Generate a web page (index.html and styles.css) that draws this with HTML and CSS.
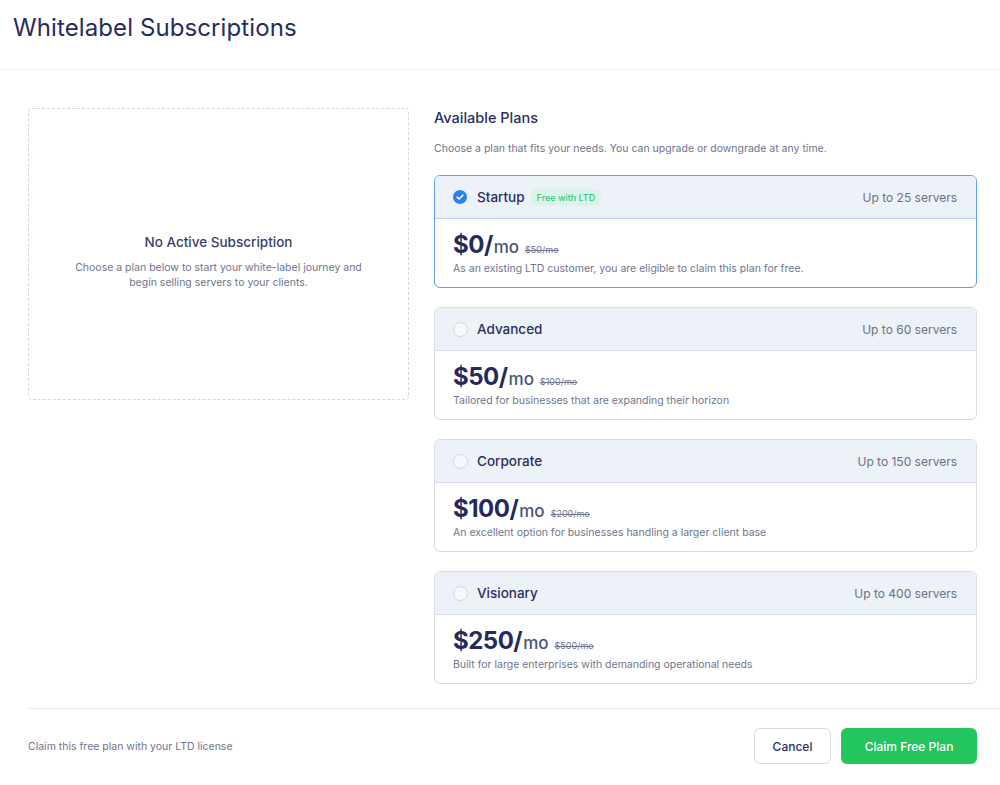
FILE: index.html
```html
<!DOCTYPE html>
<html lang="en">
<head>
    <meta charset="UTF-8">
    <meta name="viewport" content="width=device-width, initial-scale=1.0">
    <title>Whitelabel Subscriptions</title>
    <link rel="stylesheet" href="styles.css">
</head>
<body>
    <header class="page-header">
        <h1>Whitelabel Subscriptions</h1>
    </header>

    <main class="content">
        <div class="layout">
            <div class="empty-box">
                <h3>No Active Subscription</h3>
                <p>Choose a plan below to start your white-label journey and<br>begin selling servers to your clients.</p>
            </div>

            <section class="plans">
                <h2>Available Plans</h2>
                <p class="plans-sub">Choose a plan that fits your needs. You can upgrade or downgrade at any time.</p>

                <div class="plan selected">
                    <div class="plan-head">
                        <span class="radio checked">
                            <svg viewBox="0 0 14 14" width="14" height="14"><circle cx="7" cy="7" r="7" fill="#2f80ed"/><path d="M4.2 7.2l1.9 1.8 3.7-3.8" fill="none" stroke="#fff" stroke-width="1.6" stroke-linecap="round" stroke-linejoin="round"/></svg>
                        </span>
                        <span class="plan-name">Startup</span>
                        <span class="badge">Free with LTD</span>
                        <span class="servers">Up to 25 servers</span>
                    </div>
                    <div class="plan-body">
                        <div class="price"><b>$0/</b><span class="per">mo</span><s>$50/mo</s></div>
                        <p>As an existing LTD customer, you are eligible to claim this plan for free.</p>
                    </div>
                </div>

                <div class="plan">
                    <div class="plan-head">
                        <span class="radio"></span>
                        <span class="plan-name">Advanced</span>
                        <span class="servers">Up to 60 servers</span>
                    </div>
                    <div class="plan-body">
                        <div class="price"><b>$50/</b><span class="per">mo</span><s>$100/mo</s></div>
                        <p>Tailored for businesses that are expanding their horizon</p>
                    </div>
                </div>

                <div class="plan">
                    <div class="plan-head">
                        <span class="radio"></span>
                        <span class="plan-name">Corporate</span>
                        <span class="servers">Up to 150 servers</span>
                    </div>
                    <div class="plan-body">
                        <div class="price"><b>$100/</b><span class="per">mo</span><s>$200/mo</s></div>
                        <p>An excellent option for businesses handling a larger client base</p>
                    </div>
                </div>

                <div class="plan">
                    <div class="plan-head">
                        <span class="radio"></span>
                        <span class="plan-name">Visionary</span>
                        <span class="servers">Up to 400 servers</span>
                    </div>
                    <div class="plan-body">
                        <div class="price"><b>$250/</b><span class="per">mo</span><s>$500/mo</s></div>
                        <p>Built for large enterprises with demanding operational needs</p>
                    </div>
                </div>
            </section>
        </div>

        <footer class="footer">
            <span class="footer-note">Claim this free plan with your LTD license</span>
            <div class="actions">
                <button class="btn btn-cancel">Cancel</button>
                <button class="btn btn-claim">Claim Free Plan</button>
            </div>
        </footer>
    </main>
</body>
</html>
```

FILE: styles.css
```css
* { box-sizing: border-box; }
body { margin: 0; font-family: Inter, "Open Sans", sans-serif; color: #2b3060; background: #fff; }

.page-header { height: 70px; padding: 13px 13px 0; border-bottom: 1px solid #eef0f5; }
.page-header h1 { margin: 0; font-size: 24px; font-weight: 400; color: #262c5e; letter-spacing: 0.1px; }

.content { padding: 38px 0 0 28px; }
.layout { display: flex; gap: 25px; padding-right: 23px; }

.empty-box { width: 381px; height: 292px; padding-top: 15px; border: 1px dashed #d4d8e1; border-radius: 4px; display: flex; flex-direction: column; justify-content: center; align-items: center; text-align: center; }
.empty-box h3 { margin: 0 0 10px; font-size: 13.5px; font-weight: 500; color: #3a3f68; }
.empty-box p { margin: 0; font-size: 10.5px; line-height: 15px; color: #6f7490; }

.plans { flex: 1; }
.plans h2 { margin: 0; font-size: 14.5px; font-weight: 500; color: #2b3060; line-height: 20px; }
.plans-sub { margin: 14px 0 19px; font-size: 10.5px; color: #6f7490; line-height: 14px; }

.plan { border: 1px solid #d6dce8; border-radius: 6px; overflow: hidden; margin-bottom: 19px; height: 113px; }
.plan.selected { border-color: #5d9ff0; }
.plan-head { height: 43px; background: #edf1f8; border-bottom: 1px solid #d6dce8; display: flex; align-items: center; padding: 0 19px 0 18px; }
.plan.selected .plan-head { border-bottom-color: #b9d3f5; }
.radio { width: 15px; height: 15px; border-radius: 50%; border: 1px solid #cfd4de; background: #f6f8fb; margin-right: 9px; display: flex; }
.radio.checked { border: none; background: none; }
.plan-name { font-size: 13.5px; font-weight: 500; color: #2b3060; }
.badge { margin-left: 6px; background: #dcf4e8; color: #3cc47c; font-size: 9px; font-weight: 500; padding: 3px 6px; border-radius: 4px; }
.servers { margin-left: auto; font-size: 12px; color: #6b7088; }

.plan-body { padding: 12px 18px 0; }
.price { display: flex; align-items: baseline; line-height: 27px; }
.price b { font-size: 24px; font-weight: 700; color: #242a5c; letter-spacing: -0.5px; }
.price .per { font-size: 17px; font-weight: 500; color: #4c527a; margin-left: 1px; }
.price s { font-size: 9px; color: #6f7490; margin-left: 6px; }
.plan-body p { margin: -1px 0 0; font-size: 10.5px; color: #6f7490; }

.footer { margin-top: 5px; border-top: 1px solid #e8eaef; display: flex; align-items: center; justify-content: space-between; padding: 19px 23px 0 0; }
.footer-note { font-size: 10.5px; color: #6f7490; }
.actions { display: flex; gap: 10px; }
.btn { height: 36px; border-radius: 6px; font-family: inherit; font-size: 12px; font-weight: 500; cursor: pointer; }
.btn-cancel { width: 77px; background: #fff; border: 1px solid #d6dbe4; color: #2b3060; }
.btn-claim { width: 136px; background: #22c55e; border: none; color: #fff; }
```
